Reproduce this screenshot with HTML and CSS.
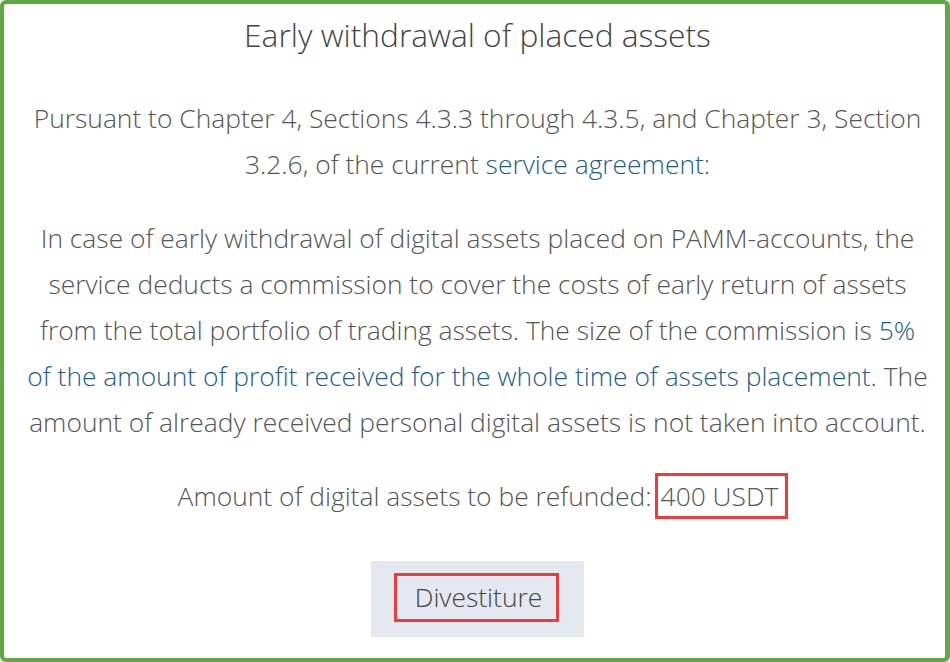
FILE: index.html
```html
<!DOCTYPE html>
<html>
<head>
  <title>Early withdrawal</title>
  <link rel="stylesheet" href="styles.css">
</head>
<body>
  <div class="frame">
    <h1 class="modal-title">Early withdrawal of placed assets</h1>

    <p class="modal-text">Pursuant to Chapter 4, Sections 4.3.3 through 4.3.5, and Chapter 3, Section 3.2.6, of the current <a href="#">service agreement</a>:</p>

    <p class="modal-text">In case of early withdrawal of digital assets placed on PAMM-accounts, the service deducts a commission to cover the costs of early return of assets from the total portfolio of trading assets. The size of the commission is <a href="#">5%<br>of the amount of profit received for the whole time of assets placement</a>. The amount of already received personal digital assets is not taken into account.</p>

    <p class="modal-text refund-line">Amount of digital assets to be refunded:<span class="marked amount">400 USDT</span></p>

    <div class="actions">
      <button type="button" class="divest-button"><span class="marked">Divestiture</span></button>
    </div>
  </div>
</body>
</html>
```

FILE: styles.css
```css
/* CSS styles */
body {
  margin: 0;
  padding: 0;
  background-color: #FFFFFF;
  font-family: "Open Sans", "Noto Sans", Arial, sans-serif;
  font-weight: 300;
  color: #555555;
}

.frame {
  height: 662px;
  box-sizing: border-box;
  border: 4px solid #5FA844;
  border-right-width: 5px;
  border-radius: 6px;
  padding: 10px 12px 0 18px;
  text-align: center;
}

.modal-title {
  margin: 0;
  font-size: 31.7px;
  font-weight: 300;
  line-height: 42px;
  color: #444444;
}

.modal-text {
  margin: 28px 0 0 0;
  font-size: 26.4px;
  line-height: 46px;
}

.modal-text:first-of-type {
  margin-top: 39px;
}

.modal-text a {
  color: #1B5E8F;
  text-decoration: none;
}

.refund-line {
  padding-left: 11px;
}

.marked {
  border: 3px solid #F33A3A;
}

.amount {
  margin-left: 3px;
  padding: 2px 7px 2px 3px;
}

.actions {
  margin-top: 42px;
}

.divest-button {
  padding: 12px 25px 15px 23px;
  background-color: #E4E8F0;
  border: none;
  font-family: inherit;
  font-weight: 300;
  font-size: 26.4px;
  line-height: 35px;
  color: #444444;
}

.divest-button .marked {
  display: inline-block;
  padding: 4px 14px 4px 18px;
}
```
